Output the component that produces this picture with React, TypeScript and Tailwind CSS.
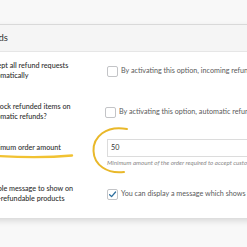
import React from "react";

function Checkbox({ checked }: { checked?: boolean }) {
  return (
    <span className="w-[11px] h-[11px] shrink-0 border border-[#c3c4c7] rounded-[2px] bg-white flex items-center justify-center">
      {checked ? (
        <svg viewBox="0 0 10 10" className="w-[9px] h-[9px]">
          <path d="M1.8 5.2 L4 7.4 L8.4 2.2" fill="none" stroke="#2c6e9e" strokeWidth={1.4} strokeLinecap="round" strokeLinejoin="round" />
        </svg>
      ) : null}
    </span>
  );
}

export default function App() {
  return (
    <div className="relative w-[247px] h-[247px] overflow-hidden bg-[#f8f8f8] font-['Lato',sans-serif]">
      <div className="pt-[24px] -ml-[14px] w-[420px]">
        <div className="bg-white border-t border-[#d9d9d9] shadow-[0_3px_6px_rgba(0,0,0,0.13)]">
          {/* section header */}
          <div className="h-[27px] bg-[#f5f5f5] border-b border-[#e6e6e6] flex items-center">
            <span className="-ml-[12px] text-[9.5px] text-[#333]">Refunds</span>
          </div>

          {/* accept all */}
          <div className="flex items-center h-[38px]">
            <div className="w-[121px] shrink-0 text-[7.2px] leading-[10px] font-medium text-[#2e2e2e]">
              Accept all refund requests
              <br />
              automatically
            </div>
            <Checkbox />
            <span className="ml-[3px] text-[7.2px] text-[#5a5a5a] whitespace-nowrap">
              By activating this option, incoming refund requests will be accepted automatically
            </span>
          </div>

          {/* restock */}
          <div className="flex items-center h-[44px]">
            <div className="w-[121px] shrink-0 text-[7.2px] leading-[10px] font-medium text-[#2e2e2e] -ml-[2px] pl-[2px]">
              Restock refunded items on
              <br />
              automatic refunds?
            </div>
            <Checkbox />
            <span className="ml-[3px] text-[7.2px] text-[#5a5a5a] whitespace-nowrap">
              By activating this option, automatic refunds will restock the items
            </span>
          </div>

          {/* minimum order amount */}
          <div className="flex items-start h-[39px] pt-[5px]">
            <div className="w-[121px] shrink-0 h-[18px] flex items-center text-[7.2px] font-medium text-[#2e2e2e]">
              Minimum order amount
            </div>
            <div className="flex flex-col">
              <div className="w-[200px] h-[18px] border border-[#dcdcdc] bg-white flex items-center px-[3px] text-[7.2px] text-[#333]">
                50
              </div>
              <span className="mt-[1px] text-[6.2px] italic text-[#8a8a8a] whitespace-nowrap">
                Minimum amount of the order required to accept customer refund requests
              </span>
            </div>
          </div>

          {/* message */}
          <div className="flex items-center h-[45px] pb-[3px]">
            <div className="w-[121px] shrink-0 text-[7.2px] leading-[10px] font-medium text-[#2e2e2e]">
              Enable message to show on
              <br />
              non-refundable products
            </div>
            <Checkbox checked />
            <span className="ml-[3px] text-[7.2px] text-[#5a5a5a] whitespace-nowrap">
              You can display a message which shows on non-refundable products
            </span>
          </div>
        </div>
      </div>

      {/* highlight annotations */}
      <svg className="absolute inset-0 pointer-events-none" width="247" height="247" viewBox="0 0 247 247">
        <path d="M-2 156 C 24 157.5, 50 157.5, 72 155.5" fill="none" stroke="#f1c232" strokeWidth={2.4} strokeLinecap="round" />
        <path d="M127 129 C 106 125, 93 137, 93.5 151 C 94 165, 107 174, 124 172" fill="none" stroke="#e9b82a" strokeWidth={2} strokeLinecap="round" />
      </svg>
    </div>
  );
}
